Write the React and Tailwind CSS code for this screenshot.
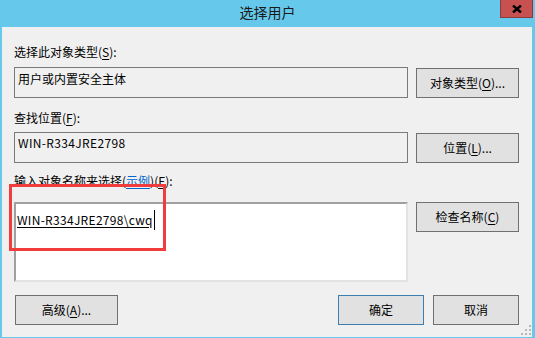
import React from "react";

const font = { fontFamily: '"Noto Sans CJK SC", "Noto Sans", sans-serif' };

function Key({ children }) {
  return <span className="underline underline-offset-2">{children}</span>;
}

function Btn({ children, className = "", primary = false }) {
  return (
    <div
      className={
        "flex items-center justify-center bg-[#e1e1e1] text-[12px] leading-[16px] text-black border " +
        (primary ? "border-[#3c7fb1] " : "border-[#707070] ") +
        className
      }
    >
      {children}
    </div>
  );
}

export default function App() {
  return (
    <div className="w-[535px] h-[338px] bg-[#66c9eb] flex flex-col overflow-hidden" style={font}>
      {/* Title bar */}
      <div className="h-[27px] relative flex justify-center pt-[3px]">
        <span className="text-[14px] leading-[18px] text-[#1a1a1a]">选择用户</span>
        <div className="absolute right-[2px] top-0 w-[33px] h-[18px] bg-[#c75050] border border-t-0 border-[#8a3a3a] flex items-center justify-center">
          <svg width="10" height="8" viewBox="0 0 10 8">
            <path d="M1 0.5 L9 7.5 M9 0.5 L1 7.5" stroke="#000" strokeWidth="2.4" />
          </svg>
        </div>
      </div>

      {/* Client area */}
      <div className="relative ml-[2px] mr-[3px] h-[310px] bg-[#f0f0f0] pl-[12px] pt-[17px] text-[12px] leading-[16px] text-black">
        <div>
          选择此对象类型(<Key>S</Key>):
        </div>
        <div className="flex items-center mt-[7px]">
          <div className="w-[394px] h-[31px] border border-[#7a7a7a] pl-[3px] pt-[3px]">用户或内置安全主体</div>
          <Btn className="ml-[8px] w-[103px] h-[30px]">
            对象类型(<Key>O</Key>)...
          </Btn>
        </div>

        <div className="mt-[12px]">
          查找位置(<Key>F</Key>):
        </div>
        <div className="flex items-center mt-[6px]">
          <div className="w-[394px] h-[31px] border border-[#7a7a7a] pl-[3px] pt-[2px] tracking-[0.35px]">WIN-R334JRE2798</div>
          <Btn className="ml-[8px] w-[103px] h-[30px]">
            位置(<Key>L</Key>)...
          </Btn>
        </div>

        <div className="mt-[10px]">
          输入对象名称来选择(<span className="text-[#0066cc] underline underline-offset-2">示例</span>)(<Key>E</Key>):
        </div>
        <div className="flex items-start mt-[13px]">
          <div className="w-[394px] h-[80px] bg-white border-2 border-t-[#a0a0a0] border-l-[#a0a0a0] border-r-[#e3e3e3] border-b-[#e3e3e3] pl-[1px] pt-[8px] flex items-start">
            <span className="underline underline-offset-2 tracking-[0.3px]">WIN-R334JRE2798\cwq</span>
            <span className="inline-block w-px h-[20px] bg-black ml-px -mt-[2px]" />
          </div>
          <Btn className="ml-[8px] w-[103px] h-[30px]">
            检查名称(<Key>C</Key>)
          </Btn>
        </div>

        <div className="flex mt-[13px] pr-[13px]">
          <Btn className="ml-px w-[103px] h-[30px]">
            高级(<Key>A</Key>)...
          </Btn>
          <div className="flex-1" />
          <Btn primary className="w-[86px] h-[30px]">
            确定
          </Btn>
          <Btn className="ml-[9px] w-[86px] h-[30px]">
            取消
          </Btn>
        </div>

        {/* annotation box */}
        <div className="absolute left-[7px] top-[157px] w-[157px] h-[67px] border-[3px] border-[#f03c3c]" />

        {/* resize grip */}
        <svg className="absolute right-[1px] bottom-[2px]" width="10" height="10" viewBox="0 0 10 10">
          <g fill="#b8b8b8">
            <rect x="8" y="0" width="2" height="2" />
            <rect x="4" y="4" width="2" height="2" />
            <rect x="8" y="4" width="2" height="2" />
            <rect x="0" y="8" width="2" height="2" />
            <rect x="4" y="8" width="2" height="2" />
            <rect x="8" y="8" width="2" height="2" />
          </g>
        </svg>
      </div>
    </div>
  );
}
